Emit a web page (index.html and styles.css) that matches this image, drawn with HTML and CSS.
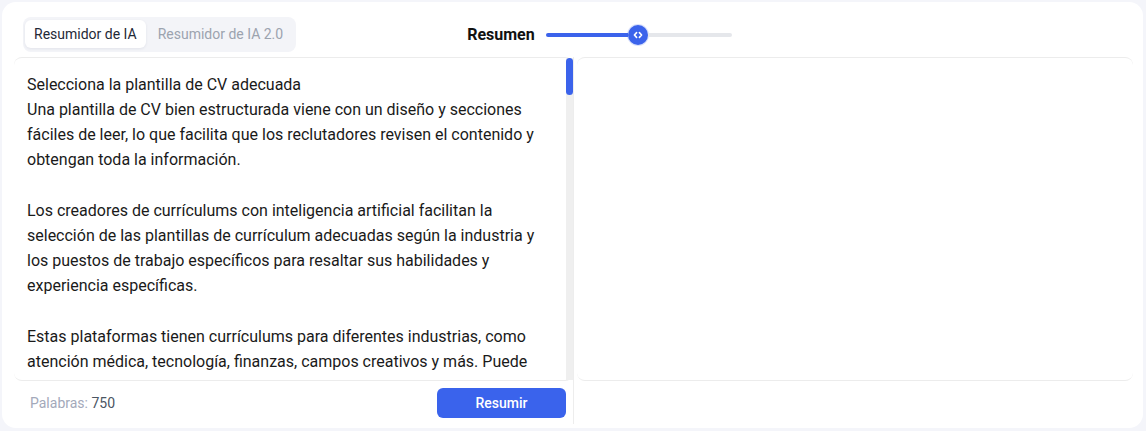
FILE: index.html
```html
<!DOCTYPE html>
<html lang="es">
<head>
  <meta charset="UTF-8">
  <meta name="viewport" content="width=device-width, initial-scale=1.0">
  <title>Resumidor de IA</title>
  <link rel="stylesheet" href="styles.css">
</head>
<body>
  <div class="card">
    <div class="header">
      <div class="tabs">
        <button class="tab tab-active">Resumidor de IA</button>
        <button class="tab">Resumidor de IA 2.0</button>
      </div>
      <div class="length">
        <span class="length-label">Resumen</span>
        <div class="slider">
          <div class="slider-fill"></div>
          <div class="slider-thumb">
            <svg width="10" height="10" viewBox="0 0 10 10" fill="none" stroke="#fff" stroke-width="1.6" stroke-linecap="round" stroke-linejoin="round">
              <path d="M3.6 2.6 1.4 5l2.2 2.4"/>
              <path d="M6.4 2.6 8.6 5 6.4 7.4"/>
            </svg>
          </div>
          <div class="slider-rest"></div>
        </div>
      </div>
    </div>

    <div class="main">
      <div class="col col-left">
        <div class="box">
          <div class="text">
            <p>Selecciona la plantilla de CV adecuada<br>
            Una plantilla de CV bien estructurada viene con un diseño y secciones fáciles de leer, lo que facilita que los reclutadores revisen el contenido y obtengan toda la información.</p>
            <p>Los creadores de currículums con inteligencia artificial facilitan la selección de las plantillas de currículum adecuadas según la industria y los puestos de trabajo específicos para resaltar sus habilidades y experiencia específicas.</p>
            <p>Estas plataformas tienen currículums para diferentes industrias, como atención médica, tecnología, finanzas, campos creativos y más. Puede encontrar plantillas para puestos de nivel inicial o superior.</p>
          </div>
          <div class="scrollbar">
            <div class="scrollbar-thumb"></div>
          </div>
        </div>
        <div class="footer">
          <span class="count"><span class="count-label">Palabras:</span> 750</span>
          <button class="btn">Resumir</button>
        </div>
      </div>
      <div class="col col-right">
        <div class="box"></div>
      </div>
    </div>
  </div>
</body>
</html>
```

FILE: styles.css
```css
html, body {
  margin: 0;
  padding: 0;
}
body {
  background-color: #f4f5fa;
  font-family: Roboto, "Liberation Sans", sans-serif;
  width: 1146px;
  height: 431px;
  overflow: hidden;
}
.card {
  margin: 2px 3px 0 2px;
  height: 426px;
  background-color: #fff;
  border-radius: 14px;
  box-sizing: border-box;
  padding: 0 10px 4px 12px;
  display: flex;
  flex-direction: column;
}
.header {
  display: flex;
  align-items: center;
  height: 55px;
  box-sizing: border-box;
  padding: 10px 0 0 9px;
}
.tabs {
  display: flex;
  padding: 3px 2px 4px;
  background-color: #f3f4f8;
  border-radius: 8px;
}
.tab {
  border: none;
  background: none;
  font-family: Roboto, "Liberation Sans", sans-serif;
  font-size: 14px;
  color: #9ca3af;
  height: 28px;
  padding: 0 9px;
  border-radius: 6px;
  cursor: pointer;
}
.tab + .tab {
  padding: 0 11px 0 12px;
}
.tab-active {
  background-color: #fff;
  color: #1f2937;
  box-shadow: 0 1px 3px rgba(30, 40, 80, 0.08);
}
.length {
  display: flex;
  align-items: center;
  margin-left: 171px;
}
.length-label {
  font-size: 16px;
  font-weight: 700;
  color: #111;
  margin-right: 11px;
}
.slider {
  display: flex;
  align-items: center;
  width: 186px;
}
.slider-fill {
  width: 82px;
  height: 4px;
  border-radius: 2px 0 0 2px;
  background-color: #3b63eb;
}
.slider-thumb {
  width: 20px;
  height: 20px;
  border-radius: 50%;
  background-color: #3b63eb;
  box-shadow: 0 0 0 1px rgba(59, 99, 235, 0.2);
  display: flex;
  align-items: center;
  justify-content: center;
}
.slider-rest {
  flex: 1;
  height: 4px;
  border-radius: 0 2px 2px 0;
  background-color: #e5e7eb;
}
.main {
  flex: 1;
  display: flex;
  gap: 3px;
}
.col {
  display: flex;
  flex-direction: column;
}
.col-left {
  width: 560px;
  border-right: 1px solid #ededed;
  box-sizing: border-box;
}
.col-right {
  flex: 1;
}
.box {
  height: 324px;
  box-sizing: border-box;
  border-top: 1px solid #ececec;
  border-bottom: 1px solid #ececec;
  border-radius: 8px;
  display: flex;
}
.text {
  flex: 1;
  overflow: hidden;
  padding: 14px 14px 0 13px;
  font-size: 16px;
  line-height: 25px;
  color: #1a1a1a;
}
.text p {
  margin: 0 0 26px;
}
.scrollbar {
  width: 7px;
  background-color: #efefef;
}
.scrollbar-thumb {
  height: 37px;
  border-radius: 4px;
  background-color: #3b63eb;
}
.footer {
  flex: 1;
  display: flex;
  align-items: center;
  justify-content: space-between;
  padding: 0 7px 0 16px;
}
.count {
  font-size: 14px;
  color: #4b5563;
}
.count-label {
  color: #a3a9ba;
}
.btn {
  width: 129px;
  height: 30px;
  border: none;
  border-radius: 6px;
  background-color: #3a63ec;
  color: #fff;
  font-family: Roboto, "Liberation Sans", sans-serif;
  font-size: 14px;
  font-weight: 500;
  cursor: pointer;
}
```
